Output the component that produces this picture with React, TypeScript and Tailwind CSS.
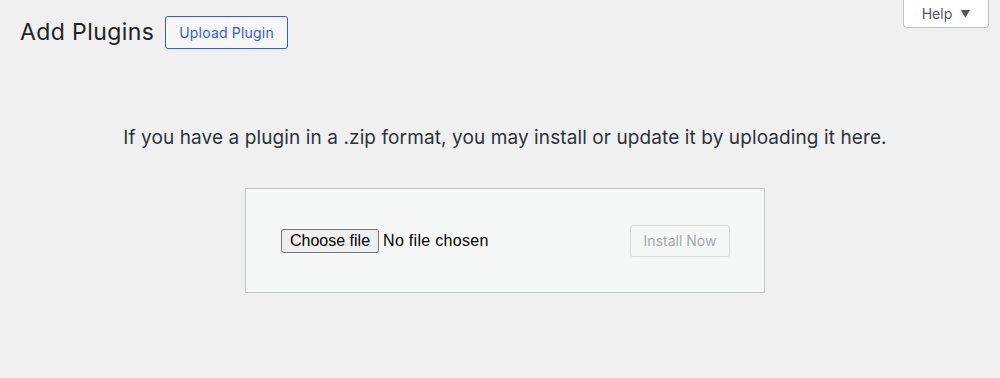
export default function App() {
  return (
    <div
      className="relative h-[378px] w-full overflow-hidden bg-[#f0f0f1] text-[#1d2327]"
      style={{ fontFamily: 'Inter, "Liberation Sans", Arial, sans-serif' }}
    >
      {/* screen meta help tab */}
      <div className="absolute right-[11px] top-0">
        <button className="flex h-[28px] w-[86px] items-center justify-center gap-[8px] rounded-b-[4px] border border-t-0 border-[#c3c4c7] bg-white text-[14px] text-[#50575e]">
          Help
          <span className="text-[10px] leading-none">▼</span>
        </button>
      </div>

      <div className="flex items-center gap-[11px] pl-[20px] pt-[16px]">
        <h1 className="text-[23px] leading-[33px] font-normal tracking-[0.4px]">Add Plugins</h1>
        <button className="h-[33px] rounded-[3px] border border-[#3858e9] bg-[#f6f7f7] px-[13px] text-[14px] tracking-[0.2px] text-[#3858e9]">
          Upload Plugin
        </button>
      </div>

      <div className="flex flex-col items-center pl-[10px] pt-[77px]">
        <p className="text-[19px] leading-[24px] tracking-[0.1px] text-[#2c3338]">
          If you have a plugin in a .zip format, you may install or update it by uploading it here.
        </p>

        <form className="mt-[38px] flex h-[105px] w-[520px] items-center justify-between border border-[#c3c4c7] bg-[#f6f7f7] pl-[35px] pr-[34px]">
          <div
            className="flex items-center gap-[4px]"
            style={{ fontFamily: '"Liberation Sans", Arial, sans-serif' }}
          >
            <span className="flex h-[24px] items-center rounded-[3px] border border-[#767676] bg-[#efefef] px-[8px] text-[16px] text-black">
              Choose file
            </span>
            <span className="text-[16px] tracking-[0.3px] text-black">No file chosen</span>
          </div>
          <button
            disabled
            className="h-[32px] w-[100px] rounded-[3px] border border-[#dcdcde] bg-[#f6f7f7] text-[14px] text-[#a7aaad]"
          >
            Install Now
          </button>
        </form>
      </div>
    </div>
  );
}
